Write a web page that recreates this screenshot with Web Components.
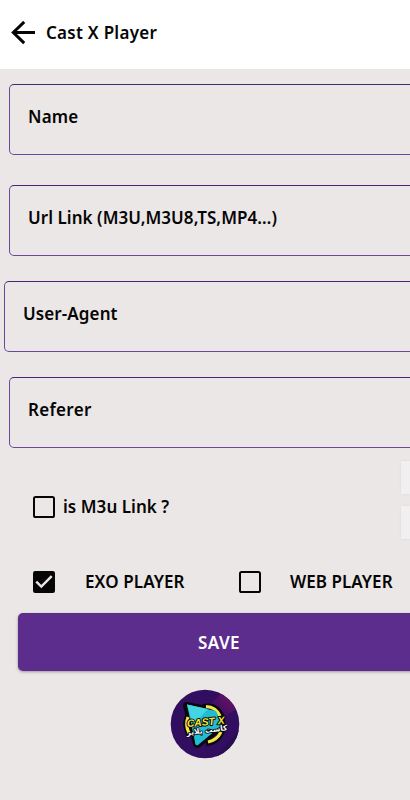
<!DOCTYPE html>
<html lang="en">
<head>
<meta charset="utf-8">
<meta name="viewport" content="width=device-width, initial-scale=1">
<title>Cast X Player</title>
<style>
  body {
    margin: 0;
    background: #ebe7e6;
    color: #050505;
    font: 600 17px/24px "Noto Sans", "Open Sans", sans-serif;
    overflow: hidden;
  }
</style>
</head>
<body>
<player-form></player-form>

<script>
class AppHeader extends HTMLElement {
  constructor() {
    super();
    this.attachShadow({ mode: 'open' });
    this.shadowRoot.innerHTML = `
      <style>
        :host {
          display: flex;
          align-items: center;
          height: 69px;
          padding: 0 0 4px 11px;
          box-sizing: border-box;
          gap: 11px;
          background: #fff;
          letter-spacing: 0.27px;
        }
        svg {
          display: block;
          width: 24px;
          height: 24px;
        }
      </style>
      <svg viewBox="0 0 24 24" fill="none" stroke="#050505" stroke-width="3">
        <path d="M24 11.5H2.5M13.2 .9L2.3 11.5l10.9 10.6"/>
      </svg>
      <slot></slot>
    `;
  }
}

class TextField extends HTMLElement {
  constructor() {
    super();
    this.attachShadow({ mode: 'open' });
    this.shadowRoot.innerHTML = `
      <style>
        :host {
          display: block;
          height: 71px;
          box-sizing: border-box;
          padding: 20px 18px 0;
          border: 1px solid #6b489c;
          border-top-color: #4b2676;
          border-radius: 5px;
          white-space: nowrap;
          letter-spacing: var(--track, 0.05px);
        }
      </style>
      <slot></slot>
    `;
  }
}

class CheckOption extends HTMLElement {
  constructor() {
    super();
    this.attachShadow({ mode: 'open' });
  }

  connectedCallback() {
    const checked = this.hasAttribute('checked');
    this.shadowRoot.innerHTML = `
      <style>
        :host {
          display: flex;
          align-items: center;
          gap: var(--gap, 30px);
          white-space: nowrap;
          letter-spacing: var(--track, 0.05px);
        }
        svg {
          display: block;
          width: 22px;
          height: 22px;
          flex: none;
        }
      </style>
      <svg viewBox="0 0 22 22" fill="none">
        ${checked
          ? '<rect width="22" height="22" rx="2.2" fill="#050505"/><path d="M3.3 10.6l5 5L18.7 5.2" stroke="#ebe7e6" stroke-width="2.4"/>'
          : '<rect x="1" y="1" width="20" height="20" rx="1.6" stroke="#050505" stroke-width="2"/>'}
      </svg>
      <slot></slot>
    `;
  }
}

class SaveButton extends HTMLElement {
  constructor() {
    super();
    this.attachShadow({ mode: 'open' });
    this.shadowRoot.innerHTML = `
      <style>
        :host {
          display: block;
        }
        button {
          display: block;
          width: 100%;
          height: 58px;
          padding: 2px 0 0;
          border: none;
          border-radius: 5px;
          background: #5c2d8d;
          box-shadow: 0 1px 3px rgba(0, 0, 0, 0.35);
          color: #fff;
          font: inherit;
          letter-spacing: 0.4px;
        }
      </style>
      <button type="button"><slot></slot></button>
    `;
  }
}

class CastLogo extends HTMLElement {
  constructor() {
    super();
    this.attachShadow({ mode: 'open' });
    this.shadowRoot.innerHTML = `
      <style>
        :host {
          display: block;
          width: 70px;
          height: 70px;
        }
        svg {
          display: block;
          overflow: visible;
        }
        text {
          font-family: "Liberation Sans", "DejaVu Sans", sans-serif;
          font-weight: 700;
          letter-spacing: 0;
          paint-order: stroke;
          stroke: #08080c;
          stroke-linejoin: round;
          text-anchor: middle;
        }
        .arabic {
          font-family: "DejaVu Sans", sans-serif;
        }
      </style>
      <svg width="70" height="70" viewBox="0 0 70 70">
        <defs>
          <clipPath id="disc"><circle cx="35" cy="35" r="34.3"/></clipPath>
          <linearGradient id="beam" x1="0" y1="1" x2="1" y2="0">
            <stop offset="0.2" stop-color="#340d64"/>
            <stop offset="0.9" stop-color="#7b1563"/>
          </linearGradient>
        </defs>
        <g clip-path="url(#disc)">
          <rect width="70" height="70" fill="#310e60"/>
          <path d="M37 19L56 0h16v16L50 31z" fill="url(#beam)"/>
          <path d="M44 70L70 40v30z" fill="#28104f"/>
        </g>
        <path d="M33 18Q47 15 52 29M52 42Q48 53 36 54M19 45Q14 36 18 27" fill="none" stroke="#08080c" stroke-width="6"/>
        <path d="M13 17Q13 13 17 13L47 19Q51 20 54 26L56 38L30 58Q25 61 23 55Z" fill="#08080c"/>
        <path d="M36 17.5Q46 18 50 27M51 43Q47 51 38 53M19 44Q15 36 18 28" fill="none" stroke="#f4e34b" stroke-width="3.2"/>
        <path d="M17 15.5L46 22 52 36 28 56Q25 57 25 53Z" fill="#20bdd5"/>
        <path d="M17 15.5L38 20 23 36Z" fill="#43d5e2"/>
        <text transform="rotate(-5 35 37)" x="36" y="36.5" font-size="10.3" font-style="italic" fill="#f8e832" stroke-width="2">CAST X</text>
        <text class="arabic" transform="rotate(-7 35 42)" x="37" y="44" font-size="7.5" fill="#fff" stroke-width="1.6">كاست بلاير</text>
      </svg>
    `;
  }
}

class PlayerForm extends HTMLElement {
  constructor() {
    super();
    this.attachShadow({ mode: 'open' });
    this.shadowRoot.innerHTML = `
      <style>
        :host {
          display: block;
          height: 800px;
          overflow: hidden;
        }
        .fields {
          display: flex;
          flex-direction: column;
          padding-top: 15px;
        }
        text-field {
          margin: 0 -10px 25px 9px;
        }
        text-field:first-child {
          margin-bottom: 30px;
        }
        .agent {
          margin-left: 4px;
        }
        .link-row {
          display: flex;
          justify-content: space-between;
          height: 97px;
          margin-top: -25px;
          padding-left: 33px;
        }
        .link-row check-option {
          height: 24px;
          margin-top: 47px;
          --gap: 8px;
        }
        .chips {
          display: flex;
          flex-direction: column;
          gap: 12px;
          margin-top: 13px;
        }
        .chips span {
          width: 9px;
          height: 33px;
          background: #f2eff0;
          box-shadow: 0 0 3px rgba(0, 0, 0, 0.06);
        }
        .players {
          display: flex;
          height: 22px;
          margin-top: 26px;
          padding-left: 33px;
        }
        .players check-option:first-child {
          width: 206px;
        }
        save-button {
          margin: 20px -10px 18px 18px;
        }
        cast-logo {
          margin-left: 170px;
        }
      </style>
      <app-header>Cast X Player</app-header>
      <div class="fields">
        <text-field style="--track: 0.2px">Name</text-field>
        <text-field>Url Link (M3U,M3U8,TS,MP4…)</text-field>
        <text-field class="agent" style="--track: 0.1px">User-Agent</text-field>
        <text-field style="--track: 0.3px">Referer</text-field>
      </div>
      <div class="link-row">
        <check-option>is M3u Link ?</check-option>
        <div class="chips"><span></span><span></span></div>
      </div>
      <div class="players">
        <check-option checked style="--track: 0.1px">EXO PLAYER</check-option>
        <check-option style="--gap: 29px">WEB PLAYER</check-option>
      </div>
      <save-button>SAVE</save-button>
      <cast-logo></cast-logo>
    `;
  }
}

customElements.define('app-header', AppHeader);
customElements.define('text-field', TextField);
customElements.define('check-option', CheckOption);
customElements.define('save-button', SaveButton);
customElements.define('cast-logo', CastLogo);
customElements.define('player-form', PlayerForm);
</script>
</body>
</html>
